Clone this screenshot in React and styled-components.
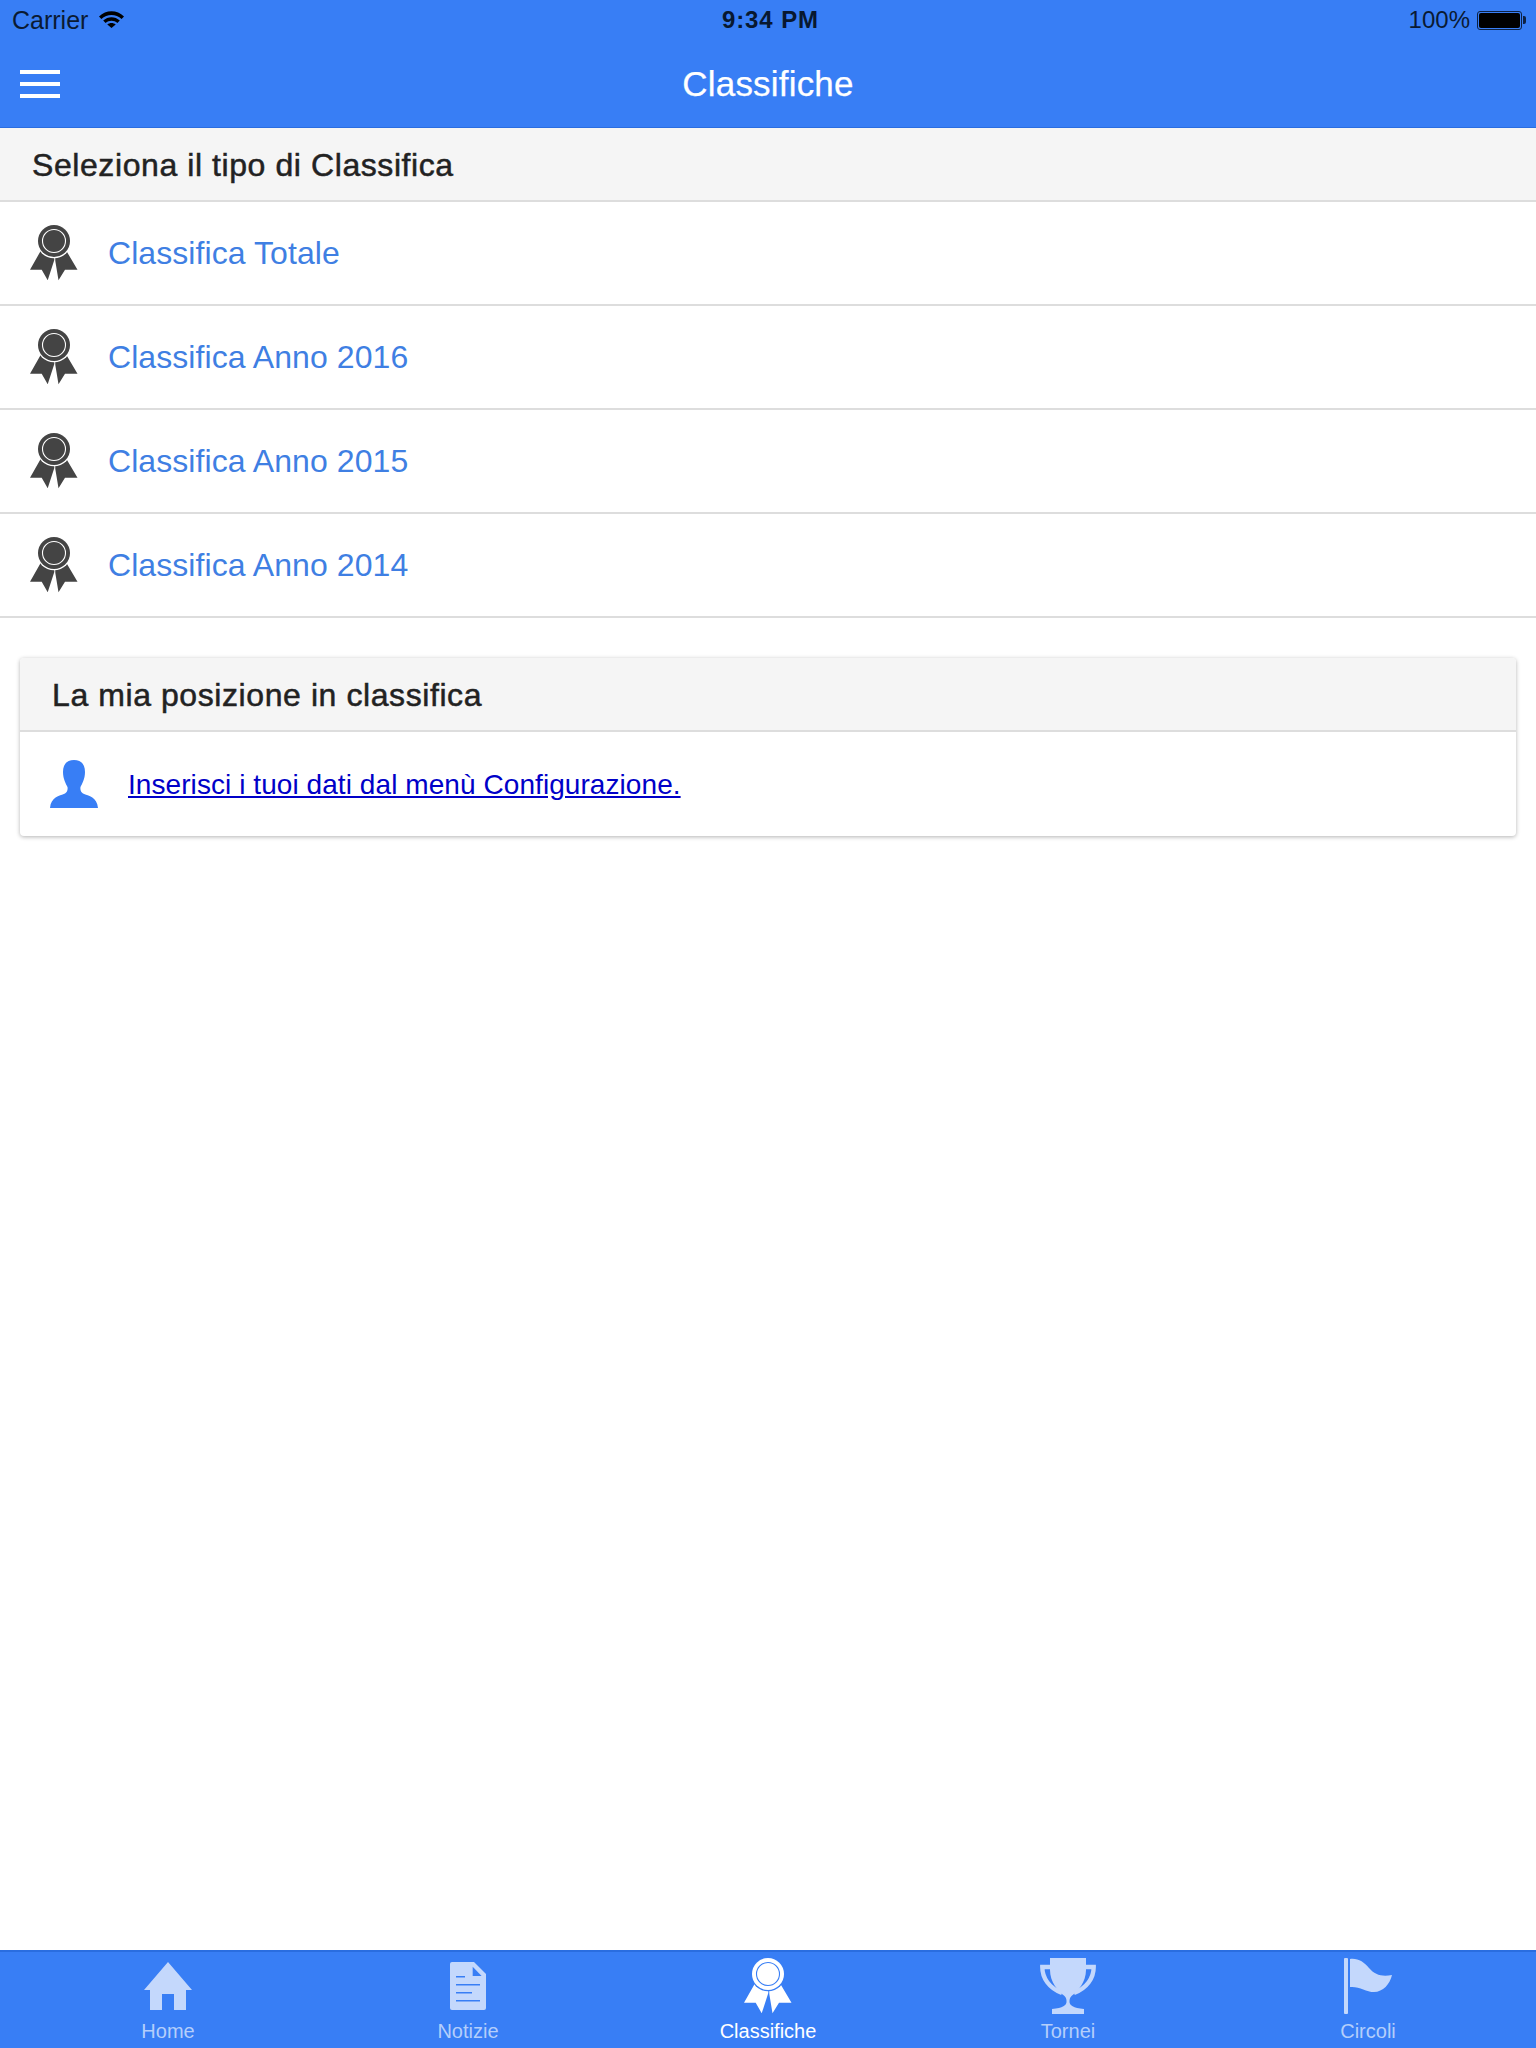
import styled, { createGlobalStyle } from "styled-components";

const GlobalStyle = createGlobalStyle`
  html, body {
    margin: 0;
    padding: 0;
    background: #fff;
  }
  * {
    box-sizing: border-box;
  }
`;

const BLUE = "#387ef5";

const RibbonIcon = ({ fill, ring }) => (
  <svg width="48" height="56" viewBox="0 0 48 56">
    <path d="M16.3 16 L0 44.7 L11.7 44.7 L17.7 55.3 L24.3 35 L24 16Z" fill={fill} />
    <path d="M30.5 16 L47.5 44.7 L35 44.7 L28.5 55.3 L25.3 36 L25 16Z" fill={fill} />
    <circle cx="24" cy="16" r="17.3" fill={ring} />
    <circle cx="24" cy="16" r="16" fill={fill} />
    <circle cx="24" cy="16" r="11.5" fill="none" stroke={ring} strokeWidth="1.1" />
  </svg>
);

const HomeIcon = ({ fill }) => (
  <svg width="48" height="48" viewBox="0 0 48 48">
    <polygon points="24 0 48 28 42 28 42 48 30 48 30 32 18 32 18 48 6 48 6 28 0 28" fill={fill} />
  </svg>
);

const DocIcon = ({ fill }) => (
  <svg width="36" height="48" viewBox="0 0 36 48">
    <path d="M2 0 H24 L36 12 V46 A2 2 0 0 1 34 48 H2 A2 2 0 0 1 0 46 V2 A2 2 0 0 1 2 0Z" fill={fill} />
    <polygon points="22.7 4.7 22.7 14 31.6 14" fill={BLUE} />
    <path d="M6 14.7 H15 M6 22.7 H30 M6 30.7 H22 M6 38.7 H30" stroke={BLUE} strokeWidth="1.6" fill="none" />
  </svg>
);

const TrophyIcon = ({ fill }) => (
  <svg width="56" height="56" viewBox="0 0 56 56">
    <path
      d="M10 0 H46 V12 C46 24 38 33 31.5 38 C29.5 40 29.5 42 29.5 44 C29.5 47 33 50 44 51 V56 H12 V51 C23 50 26.5 47 26.5 44 C26.5 42 26.5 40 24.5 38 C18 33 10 24 10 12Z"
      fill={fill}
    />
    <path d="M10 9 H2.3 C2.3 20 9 30 22 35 M46 9 H53.7 C53.7 20 47 30 34 35" fill="none" stroke={fill} strokeWidth="4.4" />
  </svg>
);

const FlagIcon = ({ fill }) => (
  <svg width="48" height="56" viewBox="0 0 48 56">
    <rect x="0" y="0" width="4" height="56" rx="1" fill={fill} />
    <path d="M6 1 C14 0 20 4 25 10 C31 17 38 19 48 17 C46 26 39 34 30 34 C22 34 15 28 6 29Z" fill={fill} />
  </svg>
);

const PersonIcon = () => (
  <svg width="48" height="48" viewBox="0 0 48 48">
    <path
      d="M24 0 C31 0 35 4 35 12 C35 19 32 24 30.5 27 C30 30 31 32 33 33.5 C39 36 47 37 48 48 H0 C1 37 9 36 15 33.5 C17 32 18 30 17.5 27 C16 24 13 19 13 12 C13 4 17 0 24 0Z"
      fill={BLUE}
    />
  </svg>
);

const WifiIcon = () => (
  <svg width="25" height="17" viewBox="0 0 25 17">
    <path d="M0 5.5 C7 -1.5 18 -1.5 25 5.5 L22.6 8 C17 2.6 8 2.6 2.4 8Z" fill="#000" />
    <path d="M4.2 9.6 C9 5 16 5 20.8 9.6 L18.4 12 C15 9 10 9 6.6 12Z" fill="#000" />
    <path d="M8.3 13.4 C10.8 11.4 14.2 11.4 16.7 13.4 L12.5 17Z" fill="#000" />
  </svg>
);

const tabs = [
  { label: "Home", icon: HomeIcon },
  { label: "Notizie", icon: DocIcon },
  { label: "Classifiche", icon: RibbonIcon, active: true },
  { label: "Tornei", icon: TrophyIcon },
  { label: "Circoli", icon: FlagIcon },
];

const rankings = ["Classifica Totale", "Classifica Anno 2016", "Classifica Anno 2015", "Classifica Anno 2014"];

const App = () => {
  return (
    <Page>
      <GlobalStyle />
      <Header>
        <StatusBar>
          <StatusLeft>
            Carrier
            <WifiIcon />
          </StatusLeft>
          <Clock>9:34 PM</Clock>
          <StatusRight>
            100%
            <Battery>
              <BatteryFill />
            </Battery>
          </StatusRight>
        </StatusBar>
        <NavBar>
          <Burger>
            <span />
            <span />
            <span />
          </Burger>
          <NavTitle>Classifiche</NavTitle>
        </NavBar>
      </Header>

      <Main>
        <Divider>
          <HeadingText>Seleziona il tipo di Classifica</HeadingText>
        </Divider>
        {rankings.map((name) => (
          <Row key={name}>
            <RibbonIcon fill="#444" ring="#fff" />
            <RowLabel>{name}</RowLabel>
          </Row>
        ))}

        <Card>
          <Divider>
            <HeadingText>La mia posizione in classifica</HeadingText>
          </Divider>
          <CardBody>
            <PersonIcon />
            <CardLink href="#">Inserisci i tuoi dati dal menù Configurazione.</CardLink>
          </CardBody>
        </Card>
      </Main>

      <TabBar>
        {tabs.map(({ label, icon: Icon, active }) => (
          <Tab key={label} $active={active}>
            <TabIcon>
              <Icon fill={active ? "#fff" : "#c4d8fc"} ring={BLUE} />
            </TabIcon>
            {label}
          </Tab>
        ))}
      </TabBar>
    </Page>
  );
};

export default App;

const Page = styled.div`
  height: 2048px;
  display: flex;
  flex-direction: column;
  font-family: "Liberation Sans", Arial, sans-serif;
`;

const Header = styled.header`
  height: 128px;
  background-color: ${BLUE};
  border-bottom: 1px solid #2a6de0;
  flex-shrink: 0;
`;

const StatusBar = styled.div`
  height: 40px;
  padding: 0 11px 0 12px;
  display: grid;
  grid-template-columns: 1fr auto 1fr;
  align-items: center;
  font-size: 24px;
  color: #0a1a33;
`;

const StatusLeft = styled.div`
  display: flex;
  align-items: center;
  gap: 11px;
  font-size: 25px;

  > svg {
    margin-top: -2px;
  }
`;

const Clock = styled.div`
  font-weight: 700;
  letter-spacing: 0.9px;
  color: #081830;
  padding-left: 4px;
`;

const StatusRight = styled.div`
  display: flex;
  align-items: center;
  justify-content: flex-end;
  gap: 7px;
`;

const Battery = styled.div`
  position: relative;
  width: 45px;
  height: 19px;
  margin-right: 3px;
  padding: 1px;
  border: 1px solid #0d2244;
  border-radius: 3px;

  &::after {
    content: "";
    position: absolute;
    top: 4px;
    right: -5px;
    width: 3px;
    height: 8px;
    background: #0d2244;
    border-radius: 0 2px 2px 0;
  }
`;

const BatteryFill = styled.div`
  height: 100%;
  background: #000;
  border-radius: 2px;
`;

const NavBar = styled.div`
  position: relative;
  height: 87px;
  display: flex;
  align-items: center;
  justify-content: center;
`;

const Burger = styled.div`
  position: absolute;
  left: 20px;
  top: 30px;
  width: 40px;
  display: flex;
  flex-direction: column;
  gap: 8px;

  > span {
    height: 4px;
    background: #fff;
  }
`;

const NavTitle = styled.div`
  color: #fff;
  font-size: 35px;
  letter-spacing: 0.2px;
  -webkit-text-stroke: 0.25px #fff;
`;

const Main = styled.main`
  flex: 1;
  background: #fff;
`;

const Divider = styled.div`
  height: 74px;
  padding: 0 32px;
  display: flex;
  align-items: center;
  background: #f5f5f5;
  border-bottom: 2px solid #ddd;
`;

const HeadingText = styled.div`
  color: #222;
  font-size: 32px;
  letter-spacing: 0.58px;
  -webkit-text-stroke: 0.5px #222;
  margin-top: 2px;
`;

const Row = styled.div`
  height: 104px;
  padding: 0 30px;
  display: flex;
  align-items: center;
  gap: 30px;
  border-bottom: 2px solid #ddd;
`;

const RowLabel = styled.div`
  color: #3f7fe3;
  font-size: 32px;
  letter-spacing: 0.07px;
`;

const Card = styled.section`
  margin: 40px 20px 0;
  background: #fff;
  border-radius: 4px;
  box-shadow: 0 1px 4px rgba(0, 0, 0, 0.3);
  overflow: hidden;
`;

const CardBody = styled.div`
  height: 104px;
  padding: 0 30px;
  display: flex;
  align-items: center;
  gap: 30px;
`;

const CardLink = styled.a`
  color: #0000c8;
  font-size: 28px;
  letter-spacing: 0.07px;
  margin-top: 2px;
`;

const TabBar = styled.nav`
  height: 98px;
  flex-shrink: 0;
  padding: 0 18px;
  display: grid;
  grid-template-columns: repeat(5, 1fr);
  background: ${BLUE};
  border-top: 2px solid #2a6de0;
`;

const Tab = styled.div`
  display: flex;
  flex-direction: column;
  align-items: center;
  color: ${(props) => (props.$active ? "#fff" : "#b4cefb")};
  font-size: 20px;
  line-height: 23px;
`;

const TabIcon = styled.div`
  height: 68px;
  display: flex;
  align-items: center;
  justify-content: center;
`;
